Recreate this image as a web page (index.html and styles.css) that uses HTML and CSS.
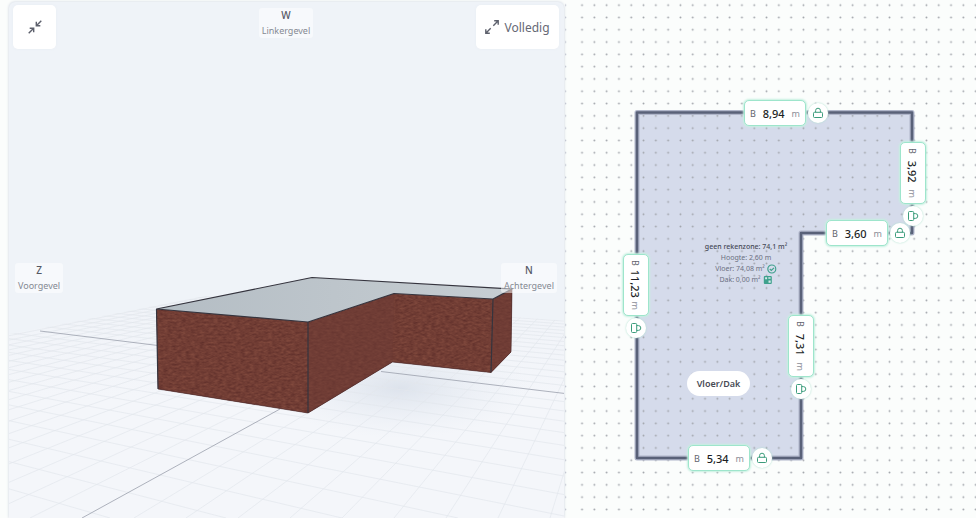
FILE: index.html
```html
<!DOCTYPE html>
<html lang="nl">
<head>
<meta charset="utf-8">
<meta name="viewport" content="width=device-width, initial-scale=1">
<title>Plattegrond</title>
<link rel="stylesheet" href="styles.css">
</head>
<body>
<svg class="defs" width="0" height="0" aria-hidden="true">
  <symbol id="lock" viewBox="0 0 12 12">
    <rect x="1.500" y="5.300" width="9" height="5.200" rx="1"/>
    <path d="M3.600 5.200V3.600a2.400 2.400 0 0 1 4.800 0v1.600"/>
  </symbol>
</svg>
<main class="workspace">
  <section class="viewer" aria-label="3D-weergave">
    <svg class="scene" viewBox="9 2 555 516" preserveAspectRatio="xMidYMax slice" aria-hidden="true">
      <defs>
        <clipPath id="ground"><path d="M0 336L205 296L570 321V530H0Z"/></clipPath>
        <linearGradient id="roof" x1="0" x2="1"><stop offset="0" stop-color="#b4bdc4"/><stop offset="1" stop-color="#c6cdd2"/></linearGradient>
        <linearGradient id="fade" x1="0" y1="295" x2="0" y2="400" gradientUnits="userSpaceOnUse"><stop offset="0" stop-color="#f0f3f8"/><stop offset="1" stop-color="#f4f6fa"/></linearGradient>
        <radialGradient id="shade"><stop offset="0" stop-color="#dde3ec"/><stop offset="1" stop-color="#e9eef5" stop-opacity="0"/></radialGradient>
        <filter id="brick" x="0" y="0" width="1" height="1" color-interpolation-filters="sRGB">
          <feTurbulence type="fractalNoise" baseFrequency="0.22 0.5" numOctaves="2" seed="4"/>
          <feColorMatrix values="0.18 0 0 0 0.355  0.14 0 0 0 0.17  0.1 0 0 0 0.155  0 0 0 0 1"/>
          <feComposite in2="SourceGraphic" operator="in"/>
        </filter>
      </defs>
      <g clip-path="url(#ground)">
        <path fill="url(#fade)" d="M0 290H570V530H0Z"/>
        <ellipse cx="400" cy="388" rx="130" ry="50" fill="url(#shade)"/>
        <g id="grid"></g>
      </g>
      <path class="axis" d="M40 331L158 345.500M381 371.500L565 393.500M280 409L82 518"/>
      <path fill="#6e3c36" d="M156.500 309L308 322L394 293.500L493 299L512 289L511 352L491 372.500L392.500 362L308 413L158 389Z"/>
      <g filter="url(#brick)">
        <path d="M156.500 309L308 322V413L158 389Z"/>
        <path d="M308 322L394 293.500L392.500 362L308 413Z"/>
        <path d="M394 293.500L493 299L491 372.500L392.500 362Z"/>
        <path d="M493 299L512 289L511 352L491 372.500Z"/>
      </g>
      <path fill="#6e3c36" d="M308 322L394 293.500L392.500 362L308 413ZM493 299L512 289L511 352L491 372.500Z" fill-opacity=".5"/>
      <path fill="url(#roof)" d="M156.500 309L312 277.500L512 289L493 299L394 293.500L308 322Z"/>
      <path class="edge" d="M156.500 309L312 277.500L512 289L493 299L394 293.500L308 322ZM308 322V413M493 299L491 372.500M156.500 309L158 389"/>
      <path class="edge thin" d="M158 389L308 413L392.500 362L491 372.500L511 352L512 289"/>
    </svg>
    <button class="tool collapse" type="button" aria-label="Verkleinen">
      <svg class="arrows" viewBox="0 0 14 14" aria-hidden="true"><path d="M13.300.700L8.300 5.700M8.300 1.700V5.700H12.300M.700 13.300L5.700 8.300M1.700 8.300H5.700V12.300"/></svg>
    </button>
    <div class="side west"><b>W</b><span>Linkergevel</span></div>
    <button class="tool full" type="button">
      <svg class="arrows" viewBox="0 0 14 14" aria-hidden="true"><path d="M8.300 5.700L13.200.800M9.200.800H13.200V4.800M5.700 8.300L.800 13.200M.800 9.200V13.200H4.800"/></svg>
      Volledig
    </button>
    <div class="side front"><b>Z</b><span>Voorgevel</span></div>
    <div class="side back"><b>N</b><span>Achtergevel</span></div>
  </section>

  <section class="plan" aria-label="Plattegrond">
    <svg class="drawing" aria-hidden="true">
      <defs>
        <pattern id="dots" x="10.900" y="-1" width="12.300" height="12.300" patternUnits="userSpaceOnUse"><circle cx="6.150" cy="6.150" r=".95" fill="#9fa3a9"/></pattern>
        <pattern id="dotedge" x="-6" y="-1" width="12.300" height="12.300" patternUnits="userSpaceOnUse"><circle cx="6.150" cy="6.150" r=".9" fill="#b3b7c6"/></pattern>
      </defs>
      <path class="floor" d="M72 112H347V233H236V458H72Z"/>
      <rect x="11" width="100%" height="100%" fill="url(#dots)"/>
      <rect width="6" height="100%" fill="url(#dotedge)"/>
      <path class="wall-halo" d="M72 112.500H347V233H236V458H72Z"/>
      <path class="wall" d="M72 112.500H347V233H236V458H72Z"/>
    </svg>

    <div class="room">
      <strong>geen rekenzone: 74,1 m²</strong>
      <span>Hoogte: 2,60 m</span>
      <span>Vloer: 74,08 m² <svg viewBox="0 0 10 10" aria-hidden="true"><circle cx="5" cy="5" r="4" fill="none" stroke="#3fa18d" stroke-width="1.200"/><path d="M3 5l1.500 1.500L7.200 3.800" fill="none" stroke="#3fa18d" stroke-width="1.200"/></svg></span>
      <span>Dak: 0,00 m² <svg viewBox="0 0 10 10" aria-hidden="true"><rect x="1" y="1" width="8" height="8" rx="1" fill="#3fa18d"/><path d="M2.300 2.300h2v2h-2zM5.700 5.500h2.200v2.200H5.700zM5.500 2.200h2.300v1.500H5.500z" fill="#d5e9ea"/></svg></span>
    </div>
    <button class="pill" type="button">Vloer/Dak</button>

    <div class="dim top">
      <label class="field">B <input type="text" value="8,94" aria-label="Breedte boven"> <span>m</span></label>
      <button class="lock" type="button" aria-label="Vergrendelen"><svg><use href="#lock"/></svg></button>
    </div>
    <div class="dim upright right">
      <label class="field">B <input type="text" value="3,92" aria-label="Breedte rechts"> <span>m</span></label>
      <button class="lock" type="button" aria-label="Vergrendelen"><svg><use href="#lock"/></svg></button>
    </div>
    <div class="dim step">
      <label class="field">B <input type="text" value="3,60" aria-label="Breedte inham"> <span>m</span></label>
      <button class="lock" type="button" aria-label="Vergrendelen"><svg><use href="#lock"/></svg></button>
    </div>
    <div class="dim upright inner">
      <label class="field">B <input type="text" value="7,31" aria-label="Breedte binnen"> <span>m</span></label>
      <button class="lock" type="button" aria-label="Vergrendelen"><svg><use href="#lock"/></svg></button>
    </div>
    <div class="dim bottom">
      <label class="field">B <input type="text" value="5,34" aria-label="Breedte onder"> <span>m</span></label>
      <button class="lock" type="button" aria-label="Vergrendelen"><svg><use href="#lock"/></svg></button>
    </div>
    <div class="dim upright left">
      <label class="field">B <input type="text" value="11,23" aria-label="Breedte links"> <span>m</span></label>
      <button class="lock" type="button" aria-label="Vergrendelen"><svg><use href="#lock"/></svg></button>
    </div>
  </section>
</main>
<script src="grid.js"></script>
</body>
</html>
```

FILE: styles.css
```css
* { box-sizing: border-box; }

body {
  margin: 0;
  background: #fbfdfc;
  color: #666975;
  font-family: "Noto Sans", "Open Sans", sans-serif;
}

button, input { font: inherit; color: inherit; }
button { cursor: pointer; border: 0; padding: 0; }

.defs { position: absolute; }

.workspace {
  display: grid;
  grid-template-columns: 565fr 411fr;
  min-height: 100vh;
  overflow: hidden;
}

/* 3D viewer */
.viewer {
  position: relative;
  display: grid;
  grid-template-columns: 1fr auto 1fr;
  grid-template-rows: auto 1fr;
  margin: 2px 1px 0 9px;
  padding: 3px 5px 12px 4px;
  border-radius: 6px 6px 0 0;
  background: #eff3f8;
  box-shadow: 0 0 3px #c9cfdc;
  overflow: hidden;
}

.scene {
  position: absolute;
  inset: 0;
  width: 100%;
  height: 100%;
}

#grid { stroke: #e3e7ed; stroke-width: .7; }
.axis { fill: none; stroke: #9a9fac; stroke-width: .8; }
.edge { fill: none; stroke: #35343e; stroke-width: 1.2; stroke-linejoin: round; }
.thin { stroke: #4a2a2c; stroke-width: .6; }

.tool {
  position: relative;
  display: flex;
  align-items: center;
  justify-content: center;
  gap: 5px;
  height: 44px;
  border-radius: 5px;
  background: #fff;
  box-shadow: 0 0 3px #e9edf3;
  font-size: 12px;
}
.collapse { width: 43px; }
.full { justify-self: end; width: 83px; }

.arrows {
  width: 14px;
  height: 14px;
  fill: none;
  stroke: #5d606c;
  stroke-width: 1.4;
}

.side {
  position: relative;
  display: flex;
  flex-direction: column;
  align-items: center;
  padding: 0 3px;
  border-radius: 3px;
  background: rgb(255 255 255 / .5);
  font-size: 9px;
  line-height: 15px;
  color: #858993;
}
.side b { font-size: 10px; font-weight: 500; color: #555864; }
.west { align-self: start; margin-top: 3px; }
.front { grid-row: 2; grid-column: 1; place-self: center start; margin-left: 2px; }
.back { grid-row: 2; grid-column: 3; place-self: center end; margin-right: 2px; }

/* Floor plan canvas */
.plan { position: relative; }

.drawing {
  position: absolute;
  inset: 0;
  width: 100%;
  height: 100%;
}
.floor { fill: #d5dbeb; }
.wall-halo { fill: none; stroke: #b0b6ca; stroke-width: 5; stroke-linejoin: round; }
.wall { fill: none; stroke: #596178; stroke-width: 2.6; stroke-linejoin: round; }

.room {
  position: absolute;
  left: 181px;
  top: 241px;
  transform: translateX(-50%);
  display: grid;
  justify-items: center;
  font-size: 7px;
  line-height: 11px;
  white-space: nowrap;
  color: #6b7081;
}
.room strong { font-weight: 500; color: #454957; }
.room span { display: flex; align-items: center; gap: 2px; }
.room svg { width: 10px; height: 10px; }

.pill {
  position: absolute;
  left: 122px;
  top: 371px;
  width: 63px;
  height: 25px;
  border-radius: 13px;
  background: #fff;
  font-size: 9px;
  font-weight: 600;
  color: #484b55;
}

.dim {
  position: absolute;
  display: flex;
  align-items: center;
  gap: 2px;
  transform: translate(-50%, -50%);
}
.upright { transform: translate(-50%, -50%) rotate(90deg); }

.top { left: 221px; top: 113px; }
.right { left: 348px; top: 184px; }
.step { left: 303px; top: 233px; }
.inner { left: 236px; top: 357px; }
.bottom { left: 165px; top: 458px; }
.left { left: 71px; top: 296px; }

.field {
  display: flex;
  align-items: center;
  width: 62px;
  height: 26px;
  padding: 0 5px;
  border: 1px solid #9ee5cc;
  border-radius: 5px;
  background: #fff;
  box-shadow: 0 0 2px 1px #c5f0e0;
  font-size: 9px;
  color: #62656e;
}
.field input {
  flex: 1;
  width: 0;
  min-width: 0;
  padding: 0;
  border: 0;
  outline: 0;
  background: none;
  text-align: center;
  font-size: 11px;
  font-weight: 500;
  color: #1d1f26;
}
.field span { color: #8b8e97; }

.lock {
  display: grid;
  place-items: center;
  width: 20px;
  height: 20px;
  border-radius: 50%;
  background: #fff;
  box-shadow: 0 0 2px #a9dfcc;
}
.lock svg {
  width: 12px;
  height: 12px;
  fill: none;
  stroke: #3b9c7b;
  stroke-width: 1;
}
```

FILE: grid.js
```js
// Ground grid: two families of lines, each running to its own vanishing point.
const families = [
  { vx: 645, vy: 209, start: 82, step: 52, from: -20, to: 24 },
  { vx: -940, vy: 215, start: 1618, step: 116, from: -16, to: 15 }
];
const base = 518;
const grid = document.getElementById('grid');
for (const f of families) {
  for (let k = f.from; k <= f.to; k++) {
    if (k === 0) continue;
    const line = document.createElementNS('http://www.w3.org/2000/svg', 'line');
    line.setAttribute('x1', f.vx);
    line.setAttribute('y1', f.vy);
    line.setAttribute('x2', f.start + k * f.step);
    line.setAttribute('y2', base);
    grid.append(line);
  }
}
```
